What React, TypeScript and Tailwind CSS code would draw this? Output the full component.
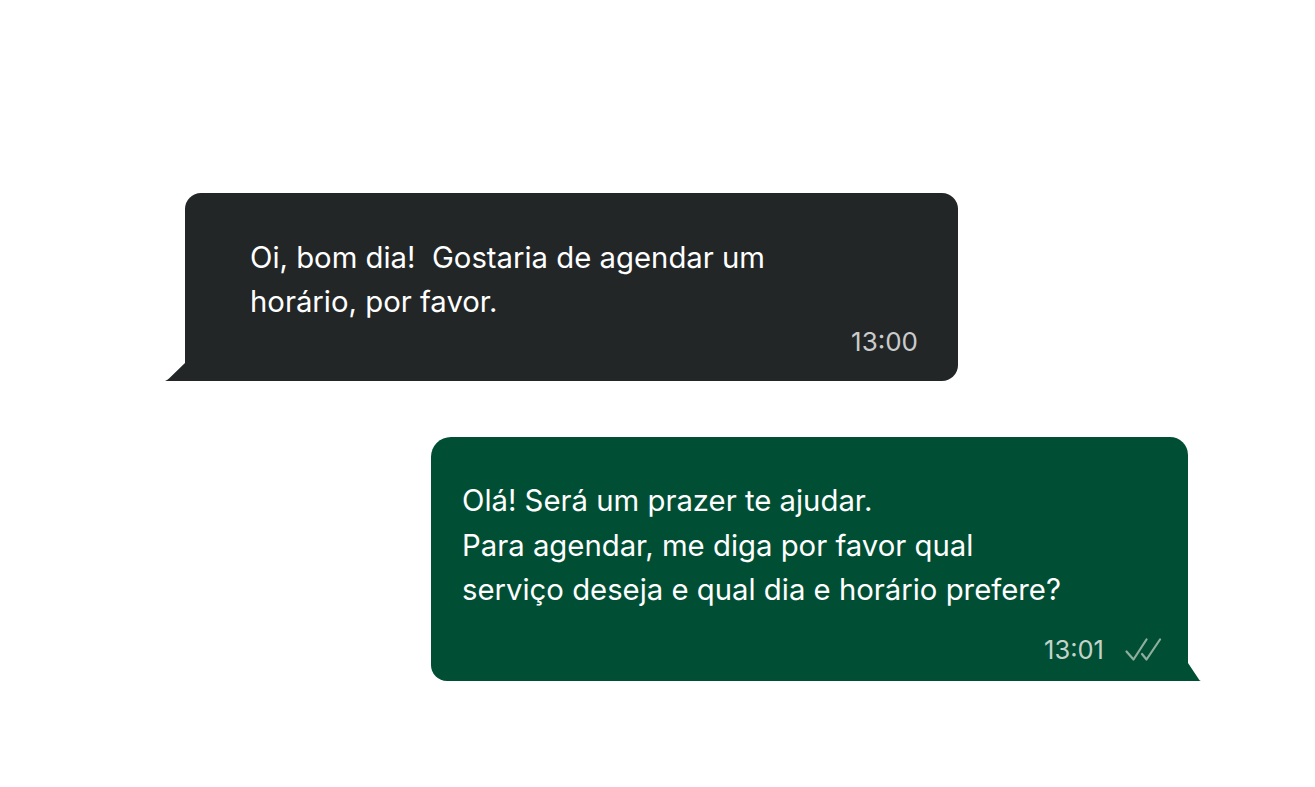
import React from "react";

export default function App() {
  return (
    <div
      className="w-[1315px] h-[787px] bg-white flex flex-col overflow-hidden"
      style={{ fontFamily: "Inter, 'Noto Sans', sans-serif" }}
    >
      <div className="relative ml-[185px] mt-[193px] w-[773px] h-[188px] bg-[#232627] rounded-tl-[16px] rounded-tr-[16px] rounded-br-[16px] flex flex-col pl-[65px] pr-[40px] pt-[43px]">
        <svg
          className="absolute left-[-20px] bottom-0"
          width="24"
          height="18"
          viewBox="0 0 24 18"
        >
          <path d="M20 0 L24 0 L24 18 L0 18 Q2 17 4 15.5 Z" fill="#232627" />
        </svg>
        <p className="text-white text-[29.3px] leading-[44px] whitespace-pre-line">
          {"Oi, bom dia!\u00a0 Gostaria de agendar um\nhorário, por favor."}
        </p>
        <div className="absolute right-[40px] bottom-[24px] text-[#c9cbcc] text-[26px] leading-[30px]">
          13:00
        </div>
      </div>

      <div className="relative ml-[431px] mt-[56px] w-[757px] h-[244px] bg-[#004f34] rounded-tl-[20px] rounded-tr-[18px] rounded-bl-[16px] flex flex-col pl-[31px] pr-[26px] pt-[42px]">
        <svg
          className="absolute right-[-13px] bottom-0"
          width="17"
          height="18"
          viewBox="0 0 17 18"
        >
          <path d="M4 0 L0 0 L0 18 L17 18 Q15.5 17.5 15 16.5 Z" fill="#004f34" />
        </svg>
        <p className="text-white text-[29.3px] leading-[44.5px] whitespace-pre-line">
          {"Olá! Será um prazer te ajudar.\nPara agendar, me diga por favor qual\nserviço deseja e qual dia e horário prefere?"}
        </p>
        <div className="absolute right-[26px] bottom-[16px] flex items-center gap-[21px]">
          <span className="text-[#c3d3ca] text-[25.5px] leading-[30px]">13:01</span>
          <svg width="37" height="24" viewBox="0 0 37 24" fill="none">
            <path
              d="M1.5 13.5 L8.5 21.5 L21.5 1.5"
              stroke="#8fae9f"
              strokeWidth="2.2"
              strokeLinecap="round"
              strokeLinejoin="round"
            />
            <path
              d="M17 16 L21.5 21.5 L35 1.5"
              stroke="#8fae9f"
              strokeWidth="2.2"
              strokeLinecap="round"
              strokeLinejoin="round"
            />
          </svg>
        </div>
      </div>
    </div>
  );
}
